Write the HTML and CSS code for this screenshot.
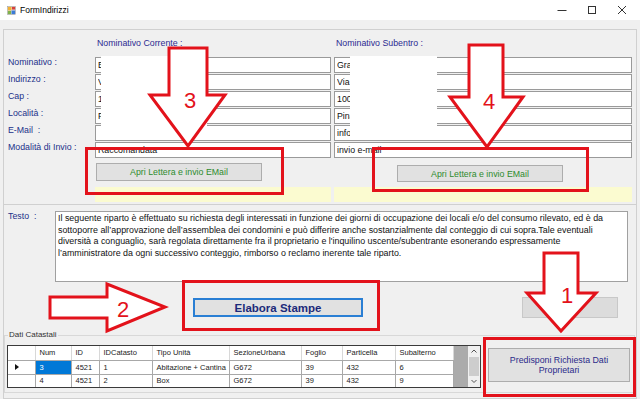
FILE: index.html
```html
<!DOCTYPE html>
<html lang="it">
<head>
    <meta charset="UTF-8">
    <meta name="viewport" content="width=device-width, initial-scale=1.0">
    <title>FormIndirizzi</title>
    <link rel="stylesheet" href="styles.css">
</head>
<body>
<div class="window">
    <header class="titlebar">
        <svg class="app-icon" viewBox="0 0 10 10">
            <rect x="0.5" y="0.5" width="9" height="9" fill="#e8e8e8" stroke="#9a9a9a" stroke-width="0.6"/>
            <rect x="1" y="1" width="4" height="4" fill="#f2b134"/>
            <rect x="5.5" y="1" width="3.5" height="3" fill="#d8403a"/>
            <rect x="5" y="5" width="4" height="4" fill="#3b7bd6"/>
            <rect x="1" y="5.5" width="3.5" height="3.5" fill="#7fb24a"/>
        </svg>
        <span class="title">FormIndirizzi</span>
        <div class="win-controls">
            <svg viewBox="0 0 30 20"><line x1="10.5" y1="10.5" x2="19.5" y2="10.5" stroke="#333" stroke-width="1"/></svg>
            <svg viewBox="0 0 30 20"><rect x="11.5" y="6.5" width="7" height="7" fill="none" stroke="#333" stroke-width="1"/></svg>
            <svg viewBox="0 0 30 20"><path d="M11 6 L19 14 M19 6 L11 14" stroke="#333" stroke-width="1"/></svg>
        </div>
    </header>

    <div class="client">
        <section class="addr">
            <div></div>
            <div class="col-head">Nominativo Corrente :</div>
            <div class="col-head">Nominativo Subentro :</div>

            <label class="lbl">Nominativo :</label>
            <div class="field left"><input type="text" value="B" readonly></div>
            <div class="field right"><input type="text" value="Gra" readonly></div>

            <label class="lbl">Indirizzo :</label>
            <div class="field left"><input type="text" value="V" readonly></div>
            <div class="field right"><input type="text" value="Via" readonly></div>

            <label class="lbl">Cap :</label>
            <div class="field left"><input type="text" value="1" readonly></div>
            <div class="field right"><input type="text" value="100" readonly></div>

            <label class="lbl">Località :</label>
            <div class="field left"><input type="text" value="P" readonly></div>
            <div class="field right"><input type="text" value="Pina" readonly></div>

            <label class="lbl">E-Mail&nbsp; :</label>
            <div class="field left"><input type="text" value="" readonly></div>
            <div class="field right"><input type="text" value="info" readonly></div>

            <label class="lbl">Modalità di Invio :</label>
            <div class="field left"><input type="text" value="Raccomandata" readonly></div>
            <div class="field right"><input type="text" value="invio e-mail" readonly></div>

            <div></div>
            <div class="left"><button class="btn-mail">Apri Lettera e invio EMail</button></div>
            <div class="right"><button class="btn-mail">Apri Lettera e invio EMail</button></div>

            <div></div>
            <div class="note left"></div>
            <div class="note right"></div>
        </section>

        <section class="lower">
            <div class="testo-row">
                <span class="lbl">Testo&nbsp; :</span>
                <div class="testo">
                    Il seguente riparto è effettuato su richiesta degli interessati in funzione dei giorni di occupazione dei locali e/o del consumo rilevato, ed è da<br>
                    sottoporre all’approvazione dell’assemblea dei condomini e può differire anche sostanzialmente dal conteggio di cui sopra.Tale eventuali<br>
                    diversità a conguaglio, sarà regolata direttamente fra il proprietario e l'inquilino uscente/subentrante esonerando espressamente<br>
                    l’amministratore da ogni successivo conteggio, rimborso o reclamo inerente tale riparto.
                </div>
            </div>

            <div class="actions">
                <button class="btn-elabora">Elabora Stampe</button>
                <button class="btn-blank"></button>
            </div>

            <fieldset class="catasto">
                <legend>Dati Catastali</legend>
                <div class="catasto-body">
                    <div class="grid-wrap">
                        <table class="grid">
                            <colgroup>
                                <col style="width:27px"><col style="width:36px"><col style="width:28px">
                                <col style="width:53px"><col style="width:77px"><col style="width:72px">
                                <col style="width:41px"><col style="width:53px"><col style="width:58px">
                            </colgroup>
                            <tr>
                                <th></th><th>Num</th><th>ID</th><th>IDCatasto</th><th>Tipo Unità</th>
                                <th>SezioneUrbana</th><th>Foglio</th><th>Particella</th><th>Subalterno</th>
                            </tr>
                            <tr>
                                <td class="rowhdr"><svg viewBox="0 0 4 6"><polygon points="0,0 4,3 0,6" fill="#111"/></svg></td>
                                <td class="sel">3</td><td>4521</td><td>1</td><td>Abitazione + Cantina</td>
                                <td>G672</td><td>39</td><td>432</td><td>6</td>
                            </tr>
                            <tr>
                                <td class="rowhdr"></td>
                                <td>4</td><td>4521</td><td>2</td><td>Box</td>
                                <td>G672</td><td>39</td><td>432</td><td>9</td>
                            </tr>
                        </table>
                        <div class="grid-fill"></div>
                        <div class="vscroll">
                            <svg class="sb-btn" viewBox="0 0 12 11"><path d="M3.5 6.5 L6 4 L8.5 6.5" fill="none" stroke="#555" stroke-width="1"/></svg>
                            <div class="sb-thumb"></div>
                            <svg class="sb-btn" viewBox="0 0 12 11"><path d="M3.5 4 L6 6.5 L8.5 4" fill="none" stroke="#555" stroke-width="1"/></svg>
                        </div>
                    </div>
                    <button class="btn-predisponi">Predisponi Richiesta Dati<br>Proprietari</button>
                </div>
            </fieldset>
        </section>
    </div>

    <!-- annotation layer drawn over the screenshot -->
    <svg class="marks" viewBox="0 0 640 399">
        <rect x="101" y="56" width="106" height="84" fill="#fff"/>
        <rect x="350" y="56" width="87" height="81" fill="#fff"/>

        <g fill="none" stroke="#e3121b" stroke-width="3">
            <rect x="86.5" y="148.5" width="196" height="45"/>
            <rect x="373.5" y="148.5" width="214" height="42"/>
            <rect x="183.5" y="281.5" width="195" height="48"/>
            <rect x="484.5" y="338.5" width="150" height="57"/>
        </g>

        <g fill="#fff" stroke="#e3121b" stroke-width="3" stroke-linejoin="miter">
            <polygon points="169,48 207,48 207,95 225,95 188,146 150,95 169,95"/>
            <polygon points="469,45 503,45 503,97 523,97 487,147 450,97 469,97"/>
            <polygon points="544,253 578,253 578,293 596,293 561,331 527,293 544,293"/>
            <polygon points="50,297 107,297 107,284 165,307 107,331 107,318 50,318"/>
        </g>

        <g class="num" fill="#e3121b" text-anchor="middle">
            <text x="190" y="108">3</text>
            <text x="489" y="109">4</text>
            <text x="567" y="303">1</text>
            <text x="123" y="317">2</text>
        </g>
    </svg>
</div>
</body>
</html>
```

FILE: styles.css
```css
* {
    box-sizing: border-box;
}
body {
    margin: 0;
    width: 640px;
    height: 399px;
    overflow: hidden;
    background: #f0f0f0;
    font-family: 'Liberation Sans', Arial, sans-serif;
    font-size: 8.8px;
    color: #1a1a1a;
}
.window {
    position: relative;
    width: 640px;
    height: 399px;
}
.titlebar {
    height: 20px;
    background: #fff;
    display: flex;
    align-items: center;
    padding-left: 7px;
}
.app-icon {
    width: 9px;
    height: 9px;
    margin-right: 4px;
}
.title {
    font-size: 8.5px;
    color: #000;
}
.win-controls {
    margin-left: auto;
    margin-right: 3px;
    display: flex;
}
.win-controls svg {
    width: 30px;
    height: 20px;
}
.client {
    padding: 9px 3px 0;
}
.addr {
    border: 1px solid #d0d0d0;
    display: grid;
    grid-template-columns: 87px 239px 298px;
    grid-template-rows: 26px repeat(6, 16px) 27px 15px;
    row-gap: 1px;
    padding: 0 4px 2px 4px;
}
.col-head {
    align-self: center;
    padding-left: 2px;
    color: #2b2b91;
}
.lbl {
    color: #22308a;
    line-height: 11px;
}
.field input {
    display: block;
    height: 16px;
    margin: 0;
    padding: 0 2px;
    border: 1px solid #9a9a9a;
    background: #fff;
    font: inherit;
    color: #111;
    outline: none;
}
.left input {
    width: 236px;
}
.right input {
    width: 298px;
}
.btn-mail {
    display: block;
    width: 166px;
    padding: 0;
    background: #e1e1e1;
    border: 1px solid #adadad;
    font: inherit;
    color: #2e8b2e;
}
.left .btn-mail {
    height: 18px;
    margin: 4px 0 0 1px;
}
.right .btn-mail {
    height: 17px;
    margin: 6px 0 0 63px;
}
.note {
    background: #fbfbd0;
}
.note.left {
    width: 236px;
}
.lower {
    height: 194px;
    border: 1px solid #d0d0d0;
    border-top: 0;
    padding-top: 6px;
}
.testo-row {
    display: flex;
    height: 71px;
}
.testo-row .lbl {
    width: 51px;
    padding-left: 4px;
}
.testo {
    width: 573px;
    height: 71px;
    background: #fff;
    border: 1px solid #a0a0a0;
    padding: 1px 0 0 2px;
    font-size: 8.9px;
    line-height: 11.5px;
    white-space: nowrap;
    overflow: hidden;
    color: #111;
}
.actions {
    display: flex;
    height: 21px;
    margin-top: 15px;
}
.btn-elabora {
    width: 170px;
    height: 19px;
    margin: 1px 0 0 189px;
    padding: 0;
    background: #e1e1e1;
    border: 2px solid #2a7fd4;
    font-family: inherit;
    font-size: 11.5px;
    font-weight: bold;
    color: #1c2a7a;
}
.btn-blank {
    width: 96px;
    height: 21px;
    margin-left: 159px;
    background: #dcdcdc;
    border: 1px solid #c8c8c8;
}
.catasto {
    margin: 12px 1px 0 0;
    padding: 5px 0 4px 2px;
    border: 1px solid #d8d8d8;
    min-width: 0;
}
.catasto legend {
    padding: 0 1px;
    margin-left: 1px;
    font-size: 8px;
    line-height: 10px;
    color: #333;
}
.catasto-body {
    display: flex;
    align-items: flex-start;
}
.grid-wrap {
    display: flex;
    width: 474px;
    height: 43px;
    border: 1px solid #3a3a3a;
    background: #ababab;
}
.grid {
    width: 445px;
    table-layout: fixed;
    border-collapse: collapse;
    font-size: 7.5px;
    align-self: flex-start;
}
.grid th,
.grid td {
    height: 14px;
    padding: 0 0 0 4px;
    border-right: 1px solid #a8a8a8;
    border-bottom: 1px solid #a8a8a8;
    background: #fff;
    text-align: left;
    font-weight: normal;
    white-space: nowrap;
    overflow: hidden;
    color: #222;
}
.grid tr:last-child td {
    height: 13px;
    border-bottom: 0;
}
.grid th {
    border-right-color: #d8d8d8;
}
.grid td.sel {
    background: #0078d7;
    color: #fff;
}
.rowhdr svg {
    display: block;
    width: 4px;
    height: 6px;
    margin-left: 3px;
}
.grid-fill {
    width: 15px;
}
.vscroll {
    width: 12px;
    display: flex;
    flex-direction: column;
    background: #f0f0f0;
}
.sb-btn {
    width: 12px;
    height: 11px;
}
.sb-thumb {
    flex: 1;
    margin: 0 1px;
    background: #cdcdcd;
}
.btn-predisponi {
    width: 142px;
    height: 34px;
    margin: 3px 0 0 7px;
    padding: 0;
    background: #e1e1e1;
    border: 1px solid #adadad;
    font: inherit;
    line-height: 10.5px;
    color: #2b2b8a;
}
.marks {
    position: absolute;
    top: 0;
    left: 0;
    width: 640px;
    height: 399px;
    pointer-events: none;
}
.num text {
    font-family: 'Liberation Sans', Arial, sans-serif;
    font-size: 22px;
}
```
